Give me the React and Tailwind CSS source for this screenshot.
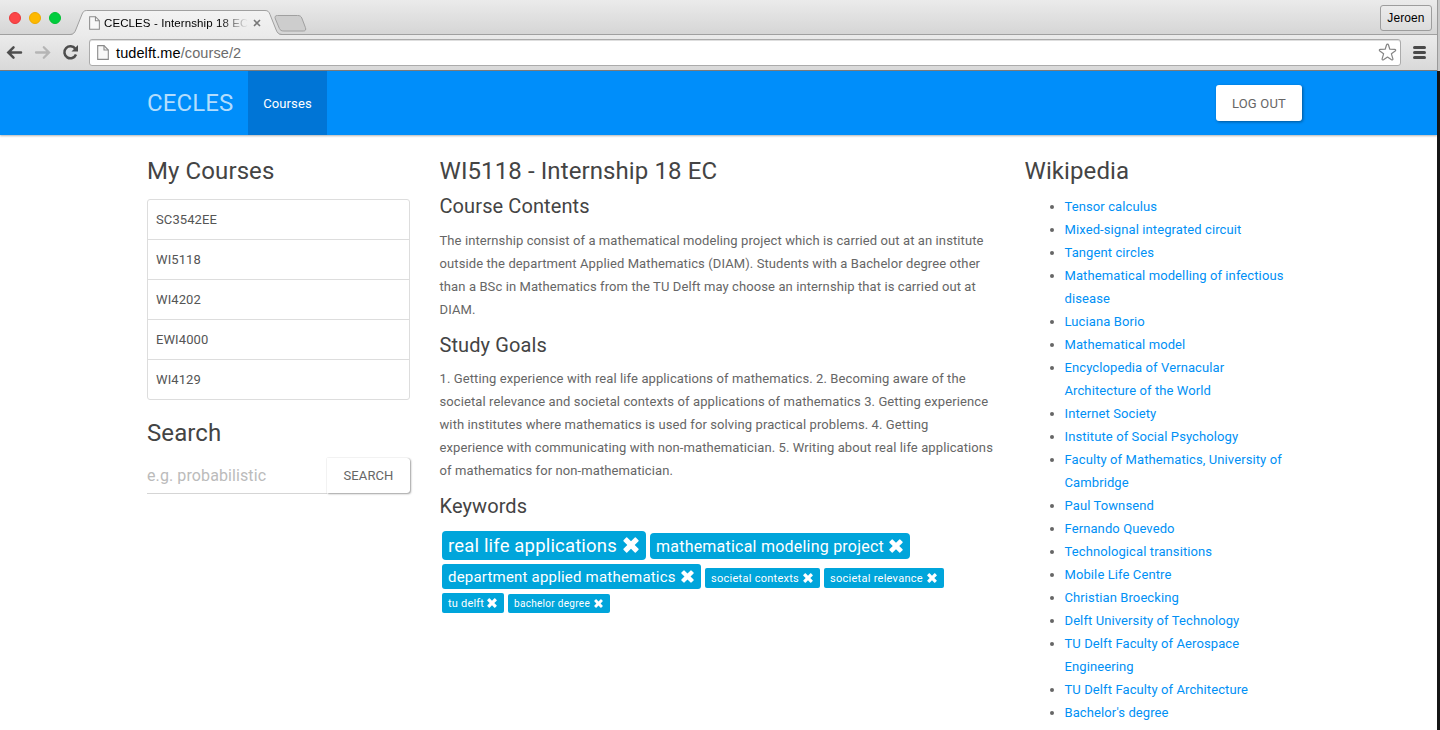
import React from "react";

const COURSES = ["SC3542EE", "WI5118", "WI4202", "EWI4000", "WI4129"];

const ARTICLES = [
  "Tensor calculus",
  "Mixed-signal integrated circuit",
  "Tangent circles",
  "Mathematical modelling of infectious disease",
  "Luciana Borio",
  "Mathematical model",
  "Encyclopedia of Vernacular Architecture of the World",
  "Internet Society",
  "Institute of Social Psychology",
  "Faculty of Mathematics, University of Cambridge",
  "Paul Townsend",
  "Fernando Quevedo",
  "Technological transitions",
  "Mobile Life Centre",
  "Christian Broecking",
  "Delft University of Technology",
  "TU Delft Faculty of Aerospace Engineering",
  "TU Delft Faculty of Architecture",
  "Bachelor's degree",
];

const KEYWORD_ROWS = [
  {
    row: "h-[29px] mb-1 items-center",
    tags: [
      { text: "real life applications", box: "w-[204px] h-[29px] rounded-[4px] pt-px pr-[7px] text-[18.5px] tracking-[0.17px]", icon: "size-[16px] mb-[3px]" },
      { text: "mathematical modeling project", box: "w-[260px] h-[26px] rounded-[4px] pt-px pr-[7px] text-[16px] tracking-[0.22px] mt-px", icon: "size-[14px] mb-[2px]" },
    ],
  },
  {
    row: "h-[25px] mb-1 items-end",
    tags: [
      { text: "department applied mathematics", box: "w-[259px] h-[25px] rounded-[3px] pt-px pr-[7px] text-[15px] tracking-[0.2px]", icon: "size-[13px] mb-[2px]" },
      { text: "societal contexts", box: "w-[115px] h-[20px] rounded-[2px] pr-[7px] text-[11px] tracking-[0.27px] mb-px", icon: "size-[10px] mb-px" },
      { text: "societal relevance", box: "w-[120px] h-[20px] rounded-[2px] pr-[7px] text-[11px] tracking-[0.27px] mb-px", icon: "size-[10px] mb-px" },
    ],
  },
  {
    row: "h-[20px] items-end",
    tags: [
      { text: "tu delft", box: "w-[62px] h-[20px] rounded-[2px] pr-[7px] text-[11px] tracking-[0.2px]", icon: "size-[10px] mb-px" },
      { text: "bachelor degree", box: "w-[102px] h-[19px] rounded-[2px] pr-[7px] text-[10px] tracking-[0.3px]", icon: "size-[9px] mb-px" },
    ],
  },
];

function RemoveIcon({ className }) {
  return (
    <svg className={className} viewBox="0 0 16 16" fill="currentColor">
      <path d="M3.200.5a.8.8 0 0 1 1 0L8 4.300 11.800.5a.8.8 0 0 1 1 0l2.700 2.700a.8.8 0 0 1 0 1L11.700 8l3.800 3.800a.8.8 0 0 1 0 1l-2.700 2.700a.8.8 0 0 1-1 0L8 11.700l-3.800 3.800a.8.8 0 0 1-1 0L.5 12.800a.8.8 0 0 1 0-1L4.300 8 .5 4.200a.8.8 0 0 1 0-1z" />
    </svg>
  );
}

function PageIcon({ className }) {
  return (
    <svg className={className} viewBox="0 0 12 15" fill="none">
      <path d="M.7.600H7L11.300 5V14.400H.7z" fill="#f8f8f8" stroke="#8a8a8a" strokeWidth="1.100" />
      <path d="M7 .600V5h4.300" stroke="#8a8a8a" strokeWidth="1.100" />
    </svg>
  );
}

function Light({ className }) {
  return <span className={"size-[12px] rounded-full border " + className} />;
}

function TabStrip() {
  return (
    <div className="relative flex h-[35px] items-start bg-linear-to-b from-[#ebebeb] to-[#d5d5d5]">
      <svg className="absolute inset-0 h-[35px] w-full" fill="none">
        <defs>
          <linearGradient id="tab" x1="0" y1="0" x2="0" y2="1">
            <stop offset="0" stopColor="#f3f3f3" />
            <stop offset="1" stopColor="#ebebeb" />
          </linearGradient>
        </defs>
        <path d="M0 34.500H1437" stroke="#a0a0a0" />
        <path
          d="M277.500 15.500h20c2.500 0 3.500.8 4.300 2.500l3.600 9.500c.8 2.200.2 3.500-2 3.500h-19.500c-2.500 0-3.600-.7-4.500-2.500l-4-9.500c-.9-2.300-.2-3.500 2.100-3.500z"
          fill="#cdcdcd"
          stroke="#a0a0a0"
        />
        <path d="M70 35c3.500-.4 4.700-2 5.700-4.500l6-15.500c1.200-3 2-4.500 5-4.500H265c3 0 4 1.300 5 4l6.200 16c1 2.600 2.200 4.100 5.800 4.500z" fill="url(#tab)" />
        <path d="M70 34.500c3.500-.2 4.700-2 5.700-4.500l6-15c1.200-3 2-4.500 5-4.500H265c3 0 4 1.300 5 4l6.200 15.500c1 2.600 2.200 4.300 5.800 4.500" stroke="#a0a0a0" />
      </svg>
      <div className="relative mt-[12px] ml-[9px] flex w-[80px] gap-2">
        <Light className="border-[#e8383a] bg-[#fc4648]" />
        <Light className="border-[#eda900] bg-[#fdb900]" />
        <Light className="border-[#00c032] bg-[#00cd3e]" />
      </div>
      <PageIcon className="relative mt-[16px] h-[14px] w-[11px]" />
      <div className="relative mt-[15px] ml-[4px] w-[144px] overflow-hidden font-['Liberation_Sans',sans-serif] text-[11.5px] leading-4 tracking-[0.1px] whitespace-nowrap text-black mask-r-from-80% mask-r-to-100%">
        CECLES - Internship 18 EC
      </div>
      <svg className="relative mt-[19px] ml-[5px] size-[8px]" viewBox="0 0 8 8">
        <path d="M1 1l6 6M7 1L1 7" stroke="#777" strokeWidth="1.600" />
      </svg>
      <div className="relative mt-[5px] mr-[5px] ml-auto flex h-[26px] w-[52px] items-center justify-center rounded-[3px] border border-[#9d9d9d] bg-linear-to-b from-[#ececec] to-[#dcdcdc] font-['Liberation_Sans',sans-serif] text-[12px] tracking-[0.1px] text-black">
        Jeroen
      </div>
    </div>
  );
}

function Toolbar() {
  return (
    <div className="flex h-[36px] items-center border-b border-[#7d7d7d] bg-linear-to-b from-[#ebebeb] to-[#d9d9d9]">
      <svg className="h-[35px] w-[89px]" viewBox="0 0 89 35" fill="none">
        <path d="M21 17.500H9M13.500 12.300L8.300 17.500l5.200 5.200" stroke="#4d4d4d" strokeWidth="2.500" strokeLinecap="round" />
        <path d="M36 17.500h12M43.800 12.300l5.200 5.200-5.200 5.200" stroke="#b5b5b5" strokeWidth="2.300" strokeLinecap="round" />
        <path d="M75.300 13.800A6 6 0 1 0 76 19.500" stroke="#4d4d4d" strokeWidth="2.500" />
        <path d="M78 10v6.500h-6.500z" fill="#4d4d4d" />
      </svg>
      <div className="flex h-[27px] w-[1312px] items-center rounded-[3px] border border-[#ababab] bg-white pr-[3px] pl-[7px] shadow-[inset_0_1px_0_#dedede]">
        <PageIcon className="h-[15px] w-[12px]" />
        <span className="ml-[7px] font-['Liberation_Sans',sans-serif] text-[14.5px] leading-5 text-black">
          tudelft.me<span className="text-[#6c6c6c]">/course/2</span>
        </span>
        <svg className="ml-auto size-[19px]" viewBox="0 0 19 19" fill="none">
          <path
            d="M9.500 1.200c.5 0 .8.3 1 .8l1.300 4.200 4.800.1c1.200.1 1.400 1 .6 1.600l-3.800 2.900 1.500 5c.2 1-.6 1.500-1.400 1l-4-2.800-4 2.800c-.8.5-1.600 0-1.400-1l1.500-5L1.800 7.900c-.8-.6-.6-1.500.6-1.600l4.800-.1L8.500 2c.2-.5.500-.8 1-.8z"
            stroke="#858585"
            strokeWidth="1.200"
            strokeLinejoin="round"
          />
        </svg>
      </div>
      <div className="ml-[12px] flex w-[13px] flex-col gap-[2px]">
        <span className="h-[3px] rounded-full bg-[#4a4a4a]" />
        <span className="h-[3px] rounded-full bg-[#4a4a4a]" />
        <span className="h-[3px] rounded-full bg-[#4a4a4a]" />
      </div>
    </div>
  );
}

function Navbar() {
  return (
    <nav className="flex h-[64px] items-center bg-[#008efa] pr-[135px] pl-[147px] shadow-[0_1px_2px_rgba(0,0,0,0.3)]">
      <span className="w-[101px] text-[24px] tracking-[0.1px] text-[#b2ddfd]">CECLES</span>
      <a className="flex h-[64px] w-[79px] items-center justify-center bg-[#0075d6] pt-px text-[13px] tracking-[0.1px] text-white">Courses</a>
      <button className="ml-auto h-[36px] w-[86px] rounded-[3px] bg-white text-[13px] tracking-[0.2px] text-[#666] shadow-[1px_1px_3px_rgba(0,0,0,0.4)]">
        LOG OUT
      </button>
    </nav>
  );
}

function Title({ children }) {
  return <h2 className="pt-px text-[24px] leading-[25px] tracking-[0.1px] text-[#444]">{children}</h2>;
}

function Subtitle({ children }) {
  return <h3 className="text-[20px] leading-[22px] tracking-[0.1px] text-[#444]">{children}</h3>;
}

export default function App() {
  return (
    <div className="flex h-[730px] w-[1440px] overflow-hidden bg-[#161616] font-[Roboto,sans-serif] text-[13px] leading-[23px] tracking-[0.1px] text-[#666]">
      <div className="flex w-[1437px] flex-col bg-white">
        <TabStrip />
        <Toolbar />
        <Navbar />
        <main className="flex pt-[23px] pl-[147px]">
          <section className="w-[263px]">
            <Title>My Courses</Title>
            <ul className="mt-[15px] divide-y divide-[#ddd] rounded-[3px] border border-[#ddd]">
              {COURSES.map((code) => (
                <li key={code} className="flex h-[40px] items-center pl-2 text-[#555] last:h-[39px]">
                  {code}
                </li>
              ))}
            </ul>
            <div className="mt-[20px]">
              <Title>Search</Title>
            </div>
            <div className="mt-[11px] flex h-[37px]">
              <div className="flex flex-1 items-center border-b border-[#d5d5d5] text-[16px] tracking-[0.1px] text-[#bbb]">e.g. probabilistic</div>
              <button className="mt-px h-[35px] w-[83px] rounded-r-[3px] bg-white text-[13px] text-[#666] shadow-[0_0_1px_rgba(0,0,0,0.35),1px_1px_2px_rgba(0,0,0,0.35)]">
                SEARCH
              </button>
            </div>
          </section>

          <section className="ml-[29.500px] w-[555px]">
            <Title>WI5118 - Internship 18 EC</Title>
            <div className="mt-[11px]">
              <Subtitle>Course Contents</Subtitle>
            </div>
            <p className="mt-[12px]">
              The internship consist of a mathematical modeling project which is carried out at an institute outside the department Applied
              Mathematics (DIAM). Students with a Bachelor degree other than a BSc in Mathematics from the TU Delft may choose an internship
              that is carried out at DIAM.
            </p>
            <div className="mt-[13px]">
              <Subtitle>Study Goals</Subtitle>
            </div>
            <p className="mt-[11px]">
              1. Getting experience with real life applications of mathematics. 2. Becoming aware of the societal relevance and societal
              contexts of applications of mathematics 3. Getting experience with institutes where mathematics is used for solving practical
              problems. 4. Getting experience with communicating with non-mathematician. 5. Writing about real life applications of
              mathematics for non-mathematician.
            </p>
            <div className="mt-[13px]">
              <Subtitle>Keywords</Subtitle>
            </div>
            <div className="mt-[14px] ml-[2.500px]">
              {KEYWORD_ROWS.map(({ row, tags }) => (
                <div key={tags[0].text} className={"flex gap-1 " + row}>
                  {tags.map(({ text, box, icon }) => (
                    <span key={text} className={"flex items-center justify-between bg-[#00a5db] pl-[6px] leading-none whitespace-nowrap text-white " + box}>
                      {text}
                      <RemoveIcon className={icon} />
                    </span>
                  ))}
                </div>
              ))}
            </div>
          </section>

          <section className="ml-[30px] w-[263px]">
            <Title>Wikipedia</Title>
            <ul className="mt-[11px] list-disc pl-[40px]">
              {ARTICLES.map((title) => (
                <li key={title}>
                  <a className="text-[#0090f5]">{title}</a>
                </li>
              ))}
            </ul>
          </section>
        </main>
      </div>
      <div className="h-[71px] w-[3px] border-l border-[#9a9a9a] bg-[#c8c8c8]" />
    </div>
  );
}
